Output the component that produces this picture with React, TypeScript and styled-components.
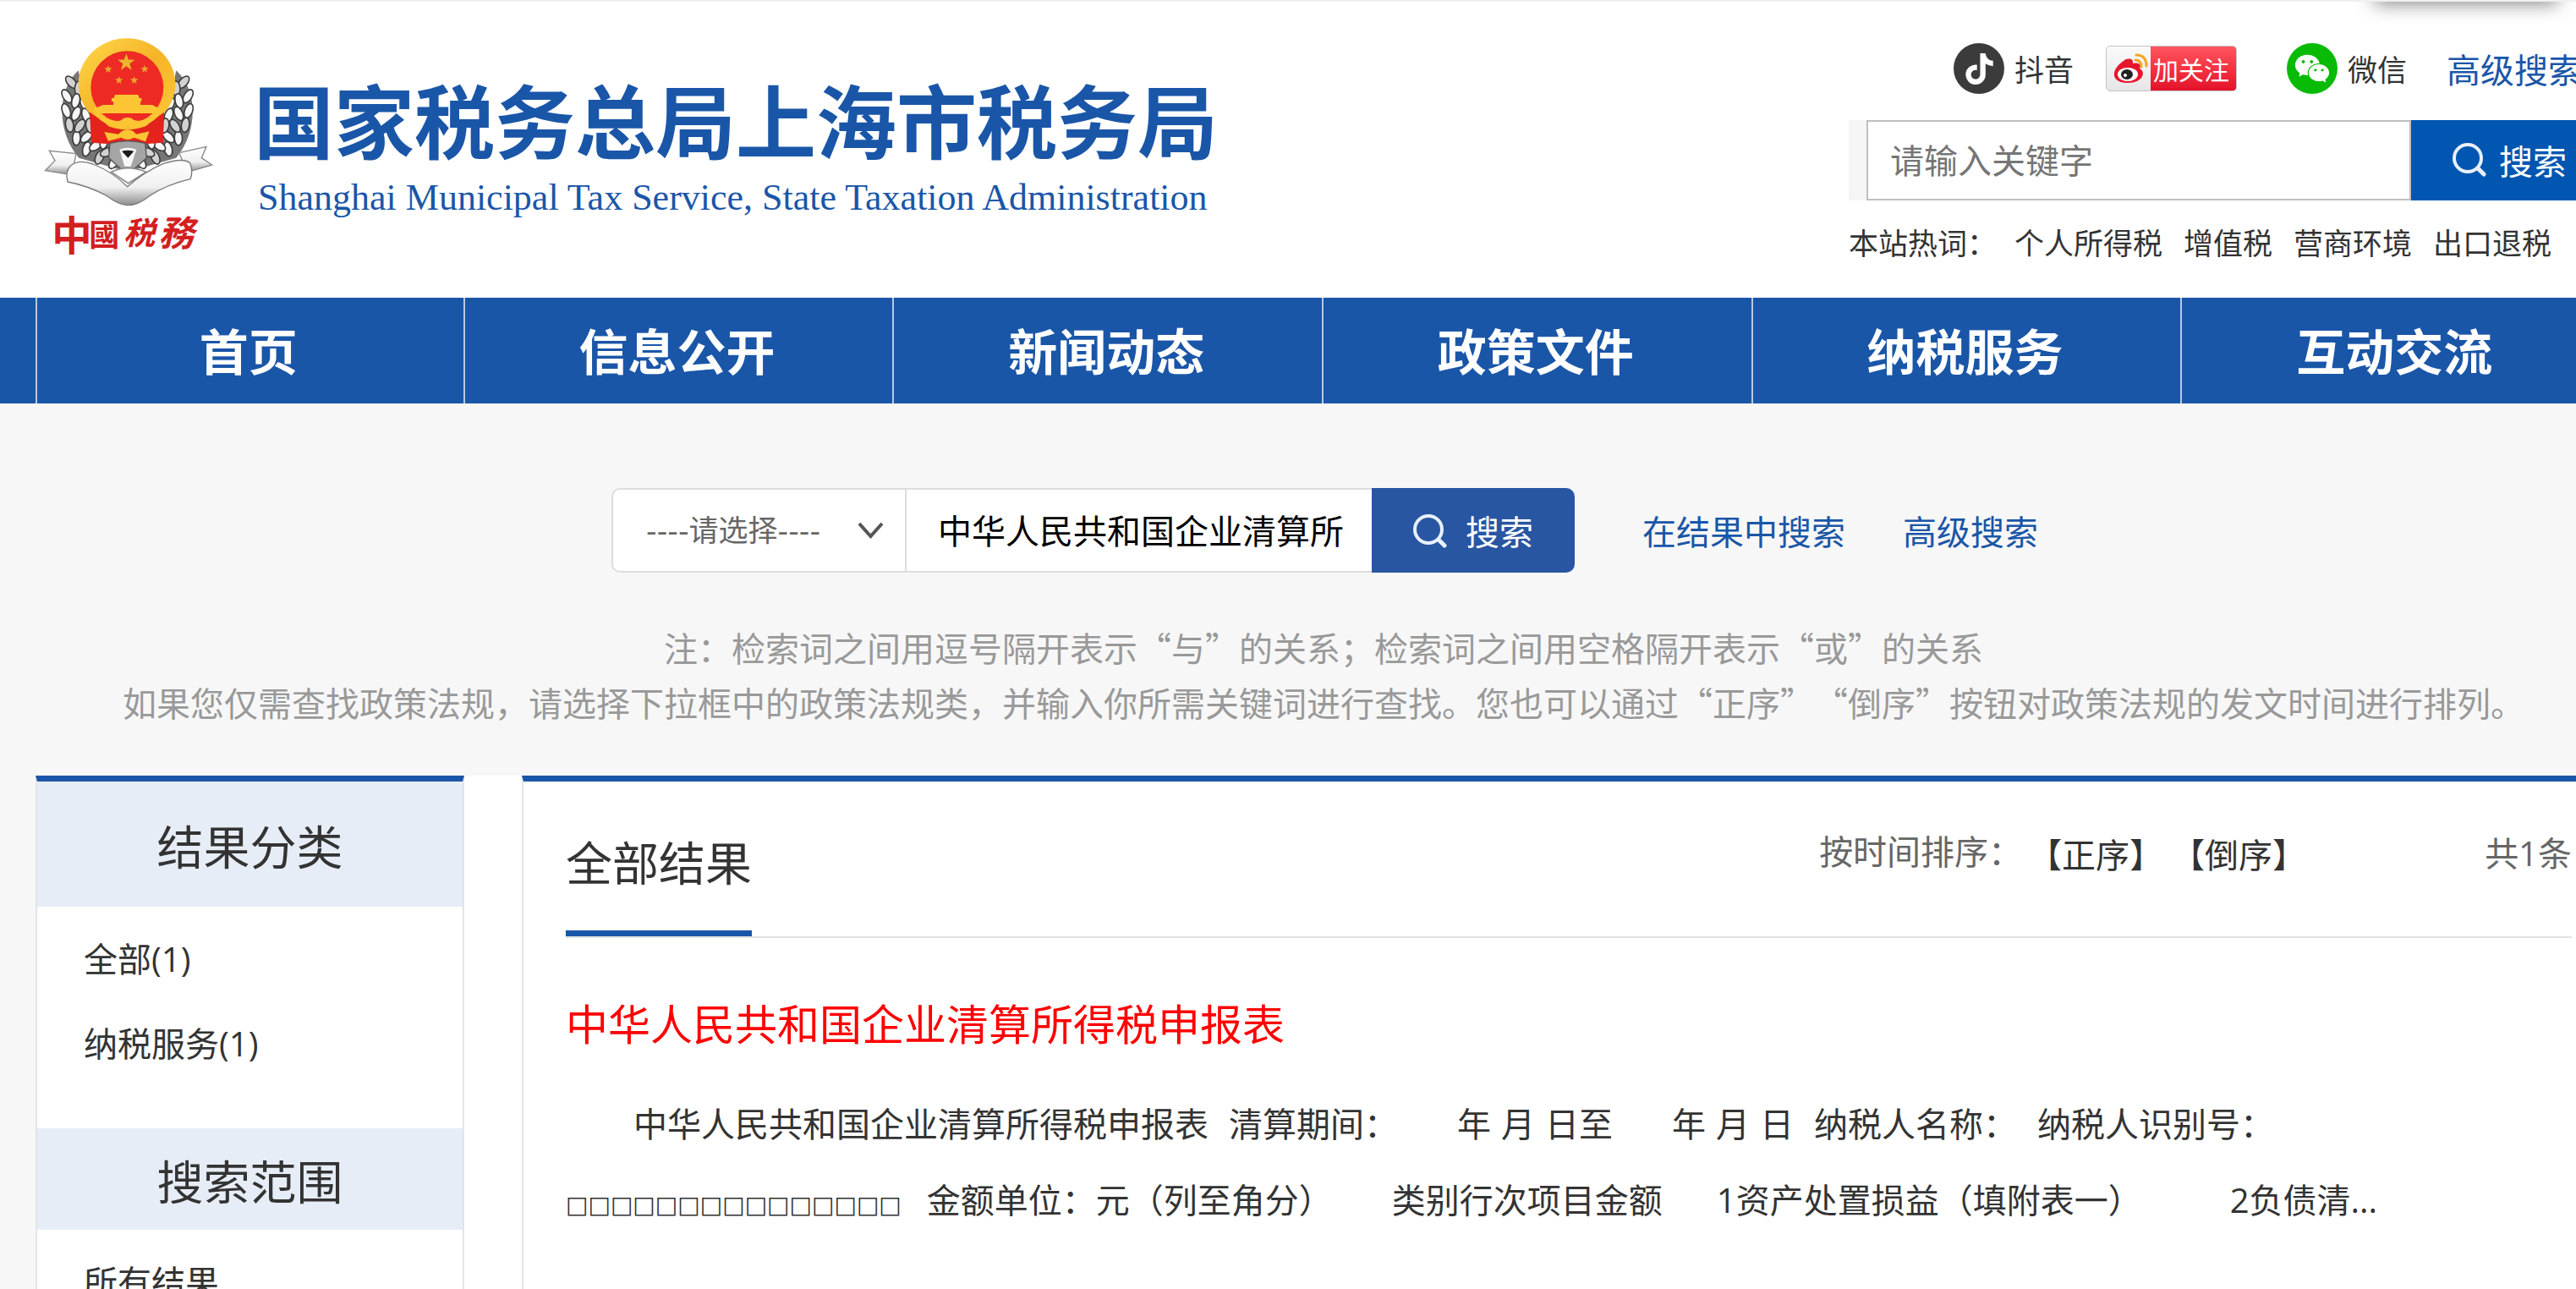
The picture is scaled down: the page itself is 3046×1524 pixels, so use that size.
import React from "react";
import styled, { createGlobalStyle } from "styled-components";
import { FaTiktok } from "react-icons/fa";
import { AiFillWechat } from "react-icons/ai";

const cjk = `"Noto Sans CJK SC", sans-serif`;
const mixed = `"Open Sans", "Noto Sans CJK SC", sans-serif`;
const blue = "#1a56a8";

const GlobalStyle = createGlobalStyle`
  *, *::before, *::after { box-sizing: border-box; }
  html { overflow-x: hidden; }
  body {
    margin: 0;
    background: #fff;
    color: #333;
    font-family: ${cjk};
    font-size: 40px;
    text-spacing-trim: space-all;
  }
  h1, h2, h3, p, ul { margin: 0; padding: 0; font-weight: 400; }
  ul { list-style: none; }
  a { color: inherit; text-decoration: none; }
  button, input, select { font: inherit; color: inherit; border: 0; margin: 0; border-radius: 0; outline: 0; }
  button { cursor: pointer; }
`;

const Page = styled.div`
  position: relative;
  height: 100vh;
  overflow: hidden;
  border-top: 2px solid #f0f0f0;
`;

const PopupShadow = styled.div`
  position: absolute;
  top: -42px;
  right: 22px;
  width: 216px;
  height: 40px;
  box-shadow: 0 4px 22px rgba(0, 0, 0, 0.5);
`;

const Container = styled.div`
  width: 100%;
  margin-left: 42px;
`;

/* ---------- header ---------- */

const Header = styled(Container).attrs({ as: "header" })`
  display: flex;
  justify-content: space-between;
  height: 350px;
`;

const Brand = styled.a`
  display: flex;
  gap: 46px;
  padding: 40px 0 0 8px;
`;

const BrandText = styled.span`
  display: flex;
  flex-direction: column;
  gap: 14px;
  padding-top: 48px;
  color: ${blue};
  white-space: nowrap;
`;

const BrandName = styled.span`
  display: block;
  font-size: 95px;
  font-weight: 700;
  line-height: 100px;
  height: 100px;
`;

const BrandEnglish = styled.span`
  font-family: "Liberation Serif", serif;
  font-size: 44px;
  line-height: 60px;
  padding-left: 5px;
`;

const Tools = styled.div`
  width: 902px;
  flex: none;
  padding-top: 49px;
`;

const Social = styled.div`
  display: flex;
  align-items: center;
  height: 60px;
  padding-left: 124px;
  white-space: nowrap;
`;

const SocialLink = styled.a`
  display: flex;
  align-items: center;
  gap: 12px;
  font-size: 35px;
  line-height: 60px;
`;

const Disc = styled.span<{ $color: string }>`
  display: grid;
  place-items: center;
  width: 60px;
  height: 60px;
  border-radius: 50%;
  background: ${(p) => p.$color};
  color: #fff;
`;

const WeiboButton = styled.button`
  display: flex;
  width: 155px;
  height: 54px;
  margin: 0 59px 0 38px;
  padding: 0;
  border: 1px solid #c4c4c4;
  border-radius: 5px;
  overflow: hidden;
  background: linear-gradient(#fafafa, #e6e6e6);
`;

const WeiboLabel = styled.span`
  flex: 1;
  padding-right: 5px;
  color: #fff;
  font-size: 30px;
  line-height: 52px;
  text-align: center;
  background: linear-gradient(#ff5560, #f53341 50%, #e3122b);
`;

const AdvancedLink = styled.a`
  margin-left: 47px;
  color: ${blue};
`;

const SiteSearch = styled.form`
  display: flex;
  height: 95px;
  margin-top: 31px;
  padding-left: 21px;
  background: #f5f5f5;
`;

const SiteInput = styled.input`
  flex: 1;
  min-width: 0;
  padding: 0 0 4px 26px;
  border: 2px solid #bfbfbf;
  background: #fff;
  &::placeholder { color: #757575; opacity: 1; }
`;

const SiteButton = styled.button`
  display: flex;
  align-items: center;
  gap: 15px;
  width: 237px;
  padding: 0 0 2px 49px;
  background: #0156b1;
  color: #fff;
`;

const HotWords = styled.div`
  display: flex;
  gap: 25px;
  margin-top: 19px;
  font-size: 35px;
  line-height: 60px;
  white-space: nowrap;
`;

const HotLabel = styled.span`
  margin-right: -4px;
`;

/* ---------- navigation ---------- */

const Nav = styled.nav`
  height: 125px;
  background: ${blue};
`;

const NavList = styled(Container).attrs({ as: "ul" })`
  display: grid;
  grid-template-columns: repeat(6, 1fr);
`;

const NavItem = styled.li`
  border-right: 2px solid #b9c8de;
  color: #fff;
  font-size: 58px;
  font-weight: 700;
  line-height: 123px;
  height: 125px;
  text-align: center;
  white-space: nowrap;
  &:first-child { border-left: 2px solid #b9c8de; }
  a { display: block; padding-right: 4px; }
`;

/* ---------- search ---------- */

const SearchBand = styled.section`
  height: 440px;
  padding-top: 100px;
  background: #f7f7f7;
`;

const SearchForm = styled.form`
  display: flex;
  align-items: center;
  justify-content: center;
  padding-left: 3px;
  white-space: nowrap;
`;

const SelectBox = styled.label`
  position: relative;
  width: 349px;
  height: 100px;
  svg {
    position: absolute;
    right: 27px;
    top: 39px;
    pointer-events: none;
  }
`;

const Select = styled.select`
  width: 100%;
  height: 100%;
  padding: 2px 0 0 39px;
  appearance: none;
  border: 2px solid #ddd;
  border-radius: 10px 0 0 10px;
  background: #fff;
  color: #666;
  font-family: "DejaVu Sans", ${cjk};
  font-size: 35px;
`;

const QueryInput = styled.input`
  width: 550px;
  height: 100px;
  padding: 0 32px 2px 37px;
  border: solid #ddd;
  border-width: 2px 0;
  background: #fff;
  color: #000;
`;

const QueryButton = styled.button`
  display: flex;
  align-items: center;
  justify-content: center;
  gap: 22px;
  width: 240px;
  height: 100px;
  padding: 0;
  border-radius: 0 10px 10px 0;
  background: #2856a2;
  color: #fff;
`;

const QueryLink = styled.a`
  margin-left: 68px;
  color: ${blue};
  &:first-of-type { margin-left: 80px; }
`;

const Notes = styled.div`
  margin-top: 56px;
  color: #999;
  line-height: 65px;
  text-align: center;
  white-space: nowrap;
`;

/* ---------- results ---------- */

const Gutter = styled.div`
  background: linear-gradient(to right, #f7f7f7 42px, #fff 42px);
  overflow: hidden;
`;

const Columns = styled(Container)`
  display: flex;
  gap: 68px;
  min-height: 607px;
`;

const Sidebar = styled.aside`
  flex: 0 0 507px;
  border: 2px solid #e4e4e4;
  border-top: 7px solid ${blue};
  background: #fff;
`;

const SideHeading = styled.h2<{ $height: number }>`
  background: #e7edf6;
  font-size: 55px;
  line-height: ${(p) => p.$height}px;
  text-align: center;
`;

const SideList = styled.ul`
  padding: 12px 0 50px 55px;
  font-family: ${mixed};
  line-height: 100px;
`;

const Main = styled.main`
  flex: 1;
  padding: 0 47px 0 50px;
  border-left: 2px solid #e4e4e4;
  border-top: 7px solid ${blue};
`;

const ResultBar = styled.div`
  display: flex;
  align-items: flex-start;
  height: 185px;
  border-bottom: 2px solid #e2e2e2;
  line-height: 60px;
  white-space: nowrap;
`;

const ResultTab = styled.h2`
  height: 183px;
  margin-right: auto;
  border-bottom: 7px solid ${blue};
  font-size: 55px;
  line-height: 186px;
`;

const SortLabel = styled.span`
  padding: 51px 7px 0 0;
  color: #666;
`;

const SortButton = styled.button`
  height: 60px;
  margin: 55px 9px 0 0;
  padding: 0;
  background: none;
  line-height: 60px;
`;

const Total = styled.span`
  margin-left: 202px;
  padding-top: 55px;
  color: #666;
  font-family: ${mixed};
`;

const ResultTitle = styled.h3`
  margin-top: 69px;
  color: #f00;
  font-size: 50px;
  line-height: 60px;
`;

const Snippet = styled.p`
  margin-top: 46px;
  font-family: ${mixed};
  line-height: 90px;
  text-indent: 80px;
`;

const Piece = styled.span<{ $after: number; $small?: boolean }>`
  display: inline-block;
  margin-right: ${(p) => p.$after}px;
  font-family: ${(p) => (p.$small ? `"DejaVu Sans", sans-serif` : "inherit")};
  font-size: ${(p) => (p.$small ? 28 : 40)}px;
  text-indent: 0;
  white-space: nowrap;
`;

/* ---------- drawings ---------- */

const star = (cx: number, cy: number, r: number) =>
  Array.from({ length: 10 }, (_, i) => {
    const a = (Math.PI / 5) * i - Math.PI / 2;
    const d = i % 2 ? r * 0.4 : r;
    return `${(cx + d * Math.cos(a)).toFixed(1)},${(cy + d * Math.sin(a)).toFixed(1)}`;
  }).join(" ");

const grains = [-1, 1].flatMap((side) =>
  [0, 1, 2].flatMap((row) =>
    Array.from({ length: 9 }, (_, i) => {
      const t = ((204 - i * 14.5 - row * 4) * Math.PI) / 180;
      const rx = 218 - row * 34;
      const ry = 205 - row * 26;
      return {
        x: 362 + side * -rx * Math.cos(t),
        y: 285 + ry * Math.sin(t),
        tilt: side * ((row === 1 ? -24 : 20) - i * 11 + 22),
      };
    })
  )
);

const Emblem = () => (
  <svg width="204" height="270" viewBox="60 36 612 810" role="img" aria-label="中国税务">
    <defs>
      <linearGradient id="gold" x1="0" y1="0" x2="1" y2="1">
        <stop offset="0" stopColor="#ffd84a" />
        <stop offset="0.5" stopColor="#f5b428" />
        <stop offset="1" stopColor="#ffc93a" />
      </linearGradient>
      <linearGradient id="silk" x1="0" y1="0" x2="0" y2="1">
        <stop offset="0" stopColor="#ffffff" />
        <stop offset="0.6" stopColor="#f0f0f0" />
        <stop offset="1" stopColor="#8d8d8d" />
      </linearGradient>
    </defs>
    <path d="M188 160C110 230 112 380 190 470L330 510H395L535 470C612 380 614 230 535 160L500 330L362 420L225 330Z" fill="#777" />
    {grains.map((g, i) => (
      <ellipse
        key={i}
        cx={g.x}
        cy={g.y}
        rx="14"
        ry="26"
        transform={`rotate(${g.tilt} ${g.x} ${g.y})`}
        fill={i % 3 ? "#f6f6f6" : "#d2d2d2"}
        stroke="#3d3d3d"
        strokeWidth="5"
      />
    ))}
    <path d="M70 515L105 480L85 445L180 455L165 530Z" fill="url(#silk)" stroke="#888" strokeWidth="4" />
    <path d="M662 495L625 470L642 430L545 452L575 520Z" fill="url(#silk)" stroke="#888" strokeWidth="4" />
    <path d="M230 305L240 412Q362 430 488 412L492 305Z" fill="#e3231c" />
    <ellipse cx="360" cy="208" rx="172" ry="162" fill="url(#gold)" />
    <circle cx="361" cy="220" r="129" fill="#ee2a24" />
    <polygon points={star(358, 132, 32)} fill="#e9b52e" />
    <polygon points={star(294, 156, 15)} fill="#e9a62e" />
    <polygon points={star(423, 155, 15)} fill="#e9a62e" />
    <polygon points={star(332, 195, 15)} fill="#e9a62e" />
    <polygon points={star(386, 195, 15)} fill="#e9a62e" />
    <path d="M318 246H400L404 258H412V270H408V282H450L466 290H478V312H245V290H258L274 282H312V270H306V258H314Z" fill="#fcc534" />
    <path d="M228 308L282 345Q300 366 332 382H395Q425 366 440 345L492 308L488 416Q362 428 234 416Z" fill="#e3231c" />
    <path d="M236 300Q262 345 310 358Q345 372 362 354Q380 372 412 358Q462 345 486 300L462 312Q440 336 405 338Q385 340 378 330Q362 324 348 330Q338 342 318 338Q282 334 262 312Z" fill="#fcc534" />
    <path d="M280 378L330 386Q345 370 362 370Q380 370 393 386L440 376L426 412L385 398Q362 412 340 398L294 410Z" fill="#fcc534" />
    <path d="M300 418Q362 402 425 418L430 470L385 510H340L296 470Z" fill="#a5a5a5" stroke="#555" strokeWidth="4" />
    <path d="M334 440L352 500H374L394 440Q362 428 334 440Z" fill="#f7f7f7" />
    <path d="M342 446Q362 440 385 446L364 470Z" fill="#1b1b1b" />
    <path d="M305 520Q362 492 428 520L365 560Z" fill="#fff" stroke="#8b8b8b" strokeWidth="5" />
    <path
      d="M160 498Q190 474 240 492Q310 520 362 572Q420 520 490 490Q560 468 584 488Q596 520 585 545Q500 565 440 605Q400 638 362 638Q330 636 290 605Q220 568 150 555Q140 520 160 498Z"
      fill="url(#silk)"
      stroke="#7b7b7b"
      strokeWidth="4"
    />
    <g fill="#d2201f" fontFamily={cjk} fontWeight="700">
      <text x="94" y="798" fontSize="142">中</text>
      <text x="226" y="782" fontSize="108">國</text>
      <text x="348" y="778" fontSize="112" fontStyle="italic">税</text>
      <text x="472" y="782" fontSize="126" fontStyle="italic">務</text>
    </g>
  </svg>
);

const WeiboMark = () => (
  <svg width="52" height="52" viewBox="0 0 52 52" aria-hidden="true">
    <path d="M20 17C25 13 32 14 31 20C38 18 42 22 39 26C47 30 43 43 25 43C12 43 8 37 9 31C10 26 14 21 20 17Z" fill="#e6162d" />
    <ellipse cx="25" cy="33" rx="12" ry="8" fill="#fff" />
    <ellipse cx="24" cy="33" rx="7" ry="6" fill="#222" />
    <circle cx="22" cy="34" r="2" fill="#fff" />
    <path d="M34 16Q41 16 41 24M35 10Q47 10 47 23" fill="none" stroke="#f5a623" strokeWidth="3" strokeLinecap="round" />
  </svg>
);

const Magnifier = () => (
  <svg width="40" height="41" viewBox="0 0 40 41" fill="none" stroke="#e9f0fa" strokeLinecap="round" aria-hidden="true">
    <circle cx="18" cy="19" r="16" strokeWidth="4" />
    <path d="M30 31L37 38" strokeWidth="5" />
  </svg>
);

const Chevron = () => (
  <svg width="31" height="22" viewBox="0 0 31 22" fill="none" stroke="#555" strokeWidth="4" aria-hidden="true">
    <path d="M2 3L15.500 18L29 3" />
  </svg>
);

/* ---------- content ---------- */

const navItems = ["首页", "信息公开", "新闻动态", "政策文件", "纳税服务", "互动交流"];
const hotWords = ["个人所得税", "增值税", "营商环境", "出口退税"];

const snippet: { text: string; after: number; small?: boolean }[] = [
  { text: "中华人民共和国企业清算所得税申报表", after: 24 },
  { text: "清算期间：", after: 70 },
  { text: "年", after: 12 },
  { text: "月", after: 12 },
  { text: "日至", after: 70 },
  { text: "年", after: 12 },
  { text: "月", after: 12 },
  { text: "日", after: 24 },
  { text: "纳税人名称：", after: 24 },
  { text: "纳税人识别号：", after: 24 },
  { text: "□□□□□□□□□□□□□□□", after: 30, small: true },
  { text: "金额单位：元（列至角分）", after: 70 },
  { text: "类别行次项目金额", after: 64 },
  { text: "1资产处置损益（填附表一）", after: 104 },
  { text: "2负债清...", after: 0 },
];

export default function App() {
  const stay = (e: React.FormEvent) => e.preventDefault();
  return (
    <Page>
      <GlobalStyle />
      <PopupShadow />
      <Header>
        <Brand href="#">
          <Emblem />
          <BrandText>
            <BrandName>国家税务总局上海市税务局</BrandName>
            <BrandEnglish>Shanghai Municipal Tax Service, State Taxation Administration</BrandEnglish>
          </BrandText>
        </Brand>
        <Tools>
          <Social>
            <SocialLink href="#">
              <Disc $color="#3b3b3b"><FaTiktok size={37} /></Disc>
              抖音
            </SocialLink>
            <WeiboButton type="button">
              <WeiboMark />
              <WeiboLabel>加关注</WeiboLabel>
            </WeiboButton>
            <SocialLink href="#">
              <Disc $color="#09bb07"><AiFillWechat size={46} /></Disc>
              微信
            </SocialLink>
            <AdvancedLink href="#">高级搜索</AdvancedLink>
          </Social>
          <SiteSearch onSubmit={stay}>
            <SiteInput type="text" placeholder="请输入关键字" aria-label="请输入关键字" />
            <SiteButton type="submit"><Magnifier />搜索</SiteButton>
          </SiteSearch>
          <HotWords>
            <HotLabel>本站热词：</HotLabel>
            {hotWords.map((w) => <a key={w} href="#">{w}</a>)}
          </HotWords>
        </Tools>
      </Header>

      <Nav>
        <NavList>
          {navItems.map((n) => <NavItem key={n}><a href="#">{n}</a></NavItem>)}
        </NavList>
      </Nav>

      <SearchBand>
        <Container>
          <SearchForm onSubmit={stay}>
            <SelectBox>
              <Select aria-label="请选择" defaultValue="">
                <option value="">----请选择----</option>
              </Select>
              <Chevron />
            </SelectBox>
            <QueryInput type="text" aria-label="搜索" defaultValue="中华人民共和国企业清算所得税申报表" />
            <QueryButton type="submit"><Magnifier />搜索</QueryButton>
            <QueryLink href="#">在结果中搜索</QueryLink>
            <QueryLink href="#">高级搜索</QueryLink>
          </SearchForm>
          <Notes>
            <p>注：检索词之间用逗号隔开表示“与”的关系；检索词之间用空格隔开表示“或”的关系</p>
            <p>如果您仅需查找政策法规，请选择下拉框中的政策法规类，并输入你所需关键词进行查找。您也可以通过“正序”“倒序”按钮对政策法规的发文时间进行排列。</p>
          </Notes>
        </Container>
      </SearchBand>

      <Gutter>
        <Columns>
          <Sidebar>
            <SideHeading $height={148}>结果分类</SideHeading>
            <SideList>
              <li><a href="#">全部(1)</a></li>
              <li><a href="#">纳税服务(1)</a></li>
            </SideList>
            <SideHeading $height={120}>搜索范围</SideHeading>
            <SideList>
              <li><a href="#">所有结果</a></li>
            </SideList>
          </Sidebar>
          <Main>
            <ResultBar>
              <ResultTab>全部结果</ResultTab>
              <SortLabel>按时间排序：</SortLabel>
              <SortButton type="button">【正序】</SortButton>
              <SortButton type="button">【倒序】</SortButton>
              <Total>共1条</Total>
            </ResultBar>
            <ResultTitle><a href="#">中华人民共和国企业清算所得税申报表</a></ResultTitle>
            <Snippet>
              {snippet.map((s, i) => (
                <Piece key={i} $after={s.after} $small={s.small}>{s.text}</Piece>
              ))}
            </Snippet>
          </Main>
        </Columns>
      </Gutter>
    </Page>
  );
}
